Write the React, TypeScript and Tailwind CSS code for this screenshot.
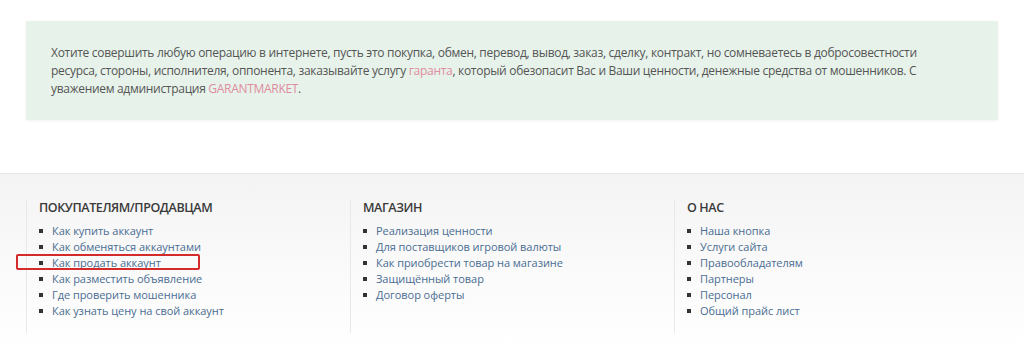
import React from 'react'

const font = { fontFamily: '"Open Sans", "Noto Sans", sans-serif' }

const columns = [
  {
    title: 'ПОКУПАТЕЛЯМ/ПРОДАВЦАМ',
    links: [
      'Как купить аккаунт',
      'Как обменяться аккаунтами',
      'Как продать аккаунт',
      'Как разместить объявление',
      'Где проверить мошенника',
      'Как узнать цену на свой аккаунт',
    ],
  },
  {
    title: 'МАГАЗИН',
    links: [
      'Реализация ценности',
      'Для поставщиков игровой валюты',
      'Как приобрести товар на магазине',
      'Защищённый товар',
      'Договор оферты',
    ],
  },
  {
    title: 'О НАС',
    links: ['Наша кнопка', 'Услуги сайта', 'Правообладателям', 'Партнеры', 'Персонал', 'Общий прайс лист'],
  },
]

export default function App() {
  return (
    <div className="w-[1024px] h-[349px] bg-white overflow-hidden" style={font}>
      <div className="px-[26px] pt-[21px]">
        <div className="bg-[#e7f3ea] shadow-[0_1px_3px_rgba(0,0,0,0.06)] h-[99px] pl-[25px] pt-[23px] text-[12px] leading-[18px] text-[#555] tracking-[-0.3px]">
          Хотите совершить любую операцию в интернете, пусть это покупка, обмен, перевод, вывод, заказ, сделку, контракт, но сомневаетесь в добросовестности
          <br />
          ресурса, стороны, исполнителя, оппонента, заказывайте услугу <a className="text-[#e08ca0]">гаранта</a>, который обезопасит Вас и Ваши ценности, денежные средства от мошенников. С
          <br />
          уважением администрация <a className="text-[#e08ca0]">GARANTMARKET</a>.
        </div>
      </div>

      <div className="mt-[53px] border-t border-[#e6e6e6] bg-gradient-to-b from-[#f4f4f4] to-white h-[176px] pt-[25px] px-[26px]">
        <div className="grid grid-cols-[324px_324px_1fr]">
          {columns.map((c, ci) => (
            <div key={c.title} className="border-l border-[#e8e8e8] pl-[12px] pb-[14px]">
              <div className="text-[12.5px] text-[#3a3a3a] font-semibold leading-[18px] mb-[6px] tracking-[-0.4px]">{c.title}</div>
              <ul>
                {c.links.map((l, li) => (
                  <li key={l} className="relative flex items-center h-[16px] text-[11px] text-[#4a6d92] tracking-[-0.05px]">
                    <span className="w-[4px] h-[4px] bg-[#333] mr-[9px] shrink-0" />
                    <a>{l}</a>
                    {ci === 0 && li === 2 && (
                      <span className="absolute left-[-23px] top-[-1px] w-[184px] h-[16px] border-2 border-[#d42a2a] rounded-[2px]" />
                    )}
                  </li>
                ))}
              </ul>
            </div>
          ))}
        </div>
      </div>
    </div>
  )
}
